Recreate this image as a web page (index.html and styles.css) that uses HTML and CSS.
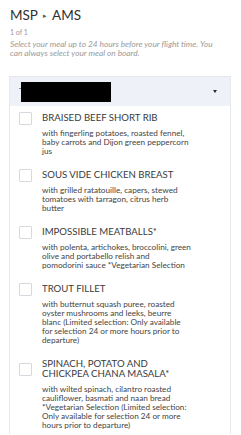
FILE: index.html
```html
<!DOCTYPE html>
<html>
<head>
<meta charset="utf-8">
<link rel="stylesheet" href="styles.css">
</head>
<body>
<div class="page">
  <h1 class="route">MSP <span class="sep">&#9656;</span> AMS</h1>
  <div class="count">1 of 1</div>
  <p class="note">Select your meal up to 24 hours before your flight time. You can always select your meal on board.</p>
  <div class="card">
    <div class="card-head">
      <span class="dash"></span>
      <span class="redact"></span>
      <span class="caret"></span>
    </div>
    <ul class="meals">
      <li class="meal">
        <div class="meal-row"><span class="box"></span><span class="meal-title">BRAISED BEEF SHORT RIB</span></div>
        <p class="meal-desc">with fingerling potatoes, roasted fennel,<br>baby carrots and Dijon green peppercorn<br>jus</p>
      </li>
      <li class="meal">
        <div class="meal-row"><span class="box"></span><span class="meal-title">SOUS VIDE CHICKEN BREAST</span></div>
        <p class="meal-desc">with grilled ratatouille, capers, stewed<br>tomatoes with tarragon, citrus herb<br>butter</p>
      </li>
      <li class="meal">
        <div class="meal-row"><span class="box"></span><span class="meal-title">IMPOSSIBLE MEATBALLS*</span></div>
        <p class="meal-desc">with polenta, artichokes, broccolini, green<br>olive and portabello relish and<br>pomodorini sauce *Vegetarian Selection</p>
      </li>
      <li class="meal">
        <div class="meal-row"><span class="box"></span><span class="meal-title">TROUT FILLET</span></div>
        <p class="meal-desc">with butternut squash puree, roasted<br>oyster mushrooms and leeks, beurre<br>blanc (Limited selection: Only available<br>for selection 24 or more hours prior to<br>departure)</p>
      </li>
      <li class="meal">
        <div class="meal-row"><span class="box"></span><span class="meal-title">SPINACH, POTATO AND<br>CHICKPEA CHANA MASALA*</span></div>
        <p class="meal-desc">with wilted spinach, cilantro roasted<br>cauliflower, basmati and naan bread<br>*Vegetarian Selection (Limited selection:<br>Only available for selection 24 or more<br>hours prior to departure)</p>
      </li>
    </ul>
  </div>
</div>
</body>
</html>
```

FILE: styles.css
```css
html, body {
  margin: 0;
  padding: 0;
  background: #ffffff;
}
body {
  font-family: Lato, "Open Sans", sans-serif;
  color: #333;
}
.page {
  padding: 7px 10px 0 9px;
}
.route {
  margin: 0 0 0 1px;
  font-size: 13.5px;
  line-height: 16px;
  font-weight: 400;
  color: #2f2f2f;
}
.sep {
  font-size: 7px;
  vertical-align: 2px;
  color: #555;
  margin: 0 2px;
}
.count {
  margin: 4px 0 0 1px;
  font-size: 7px;
  line-height: 10px;
  color: #9a9a9a;
}
.note {
  margin: 3px 0 0 1px;
  max-width: 212px;
  font-size: 8.3px;
  line-height: 9px;
  font-style: italic;
  color: #9a9a9a;
}
.card {
  margin-top: 18px;
  border: 1px solid #e4e7ec;
  border-bottom: none;
  padding-bottom: 4px;
}
.card-head {
  height: 29px;
  background: #eef1f7;
  display: flex;
  align-items: center;
  padding: 0 13px 0 9px;
}
.dash {
  width: 2px;
  height: 1px;
  background: #888;
  margin-top: -6px;
}
.redact {
  width: 90px;
  height: 20px;
  background: #000;
}
.caret {
  margin-left: auto;
  width: 0;
  height: 0;
  border-left: 2.5px solid transparent;
  border-right: 2.5px solid transparent;
  border-top: 3.5px solid #2b2b2b;
}
.meals {
  list-style: none;
  margin: 0;
  padding: 7px 9px 0 9px;
}
.meal {
  margin-bottom: 14.5px;
}
.meal:last-child {
  margin-bottom: 0;
}
.meal-row {
  display: flex;
  align-items: center;
}
.box {
  flex: none;
  width: 11px;
  height: 11px;
  margin: -1.5px 0;
  border: 1px solid #d6d9df;
  border-radius: 1px;
  background: #fff;
}
.meal-title {
  margin-left: 10px;
  font-size: 9.6px;
  line-height: 10px;
  color: #3a3a3a;
  white-space: nowrap;
}
.meal-desc {
  margin: 5.5px 0 0 23px;
  font-size: 8.2px;
  line-height: 9px;
  color: #444;
  white-space: nowrap;
}
```
